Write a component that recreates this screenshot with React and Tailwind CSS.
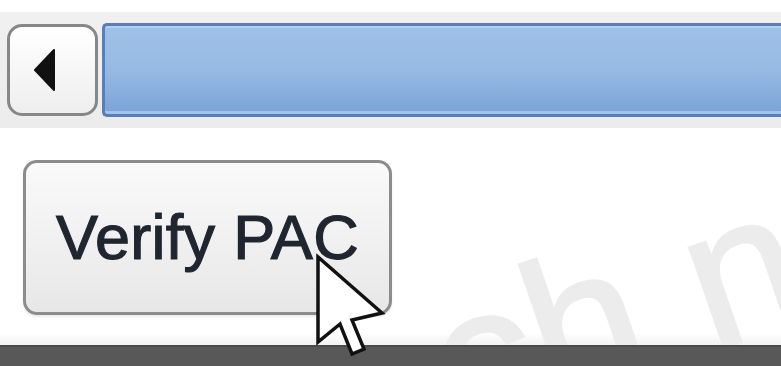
export default function App() {
  return (
    <div className="relative w-[781px] h-[366px] overflow-hidden bg-white flex flex-col" style={{ fontFamily: '"Liberation Sans", Arial, sans-serif' }}>
      {/* watermark */}
      <span
        className="absolute left-[404px] top-[279px] text-[200px] leading-none text-[#ececec] whitespace-pre origin-top-left rotate-[-19deg] select-none [-webkit-text-stroke:3px_#ececec]"
      >
        ch n
      </span>

      {/* scrollbar */}
      <div className="relative pt-[12px] bg-gradient-to-b from-white to-[#f5f5f5]">
        <div className="h-[116px] bg-gradient-to-b from-[#f0f0f0] to-[#ececec] flex items-center pl-[7px] gap-[4px]">
          <div className="w-[91px] h-[92px] shrink-0 rounded-[15px] border-[3px] border-[#878787] bg-gradient-to-b from-white to-[#eeeeee] flex items-center justify-center">
            <svg width="24" height="44" viewBox="0 0 24 44" className="mr-[16px]">
              <path d="M2 22 L21 2 L21 42 Z" fill="#111" stroke="#111" strokeWidth="2" strokeLinejoin="round" />
            </svg>
          </div>
          <div className="flex-1 h-[94px] rounded-l-[5px] border-y-[3px] border-l-[3px] border-[#5c7fb3] bg-gradient-to-b from-[#9fc1e8] via-[#97bae4] to-[#7aa3d5] shadow-[inset_0_2px_0_#b3d0f0,inset_0_-3px_0_#a3c3ea]" />
        </div>
      </div>

      {/* button row */}
      <div className="relative pl-[23px] pt-[32px]">
        <div className="w-[369px] h-[155px] rounded-[14px] border-[3px] border-[#8c8c8c] bg-gradient-to-b from-[#fafafa] to-[#e7e7e7] flex items-center justify-center shadow-[0_2px_2px_rgba(0,0,0,0.08)]">
          <span className="text-[63px] leading-none text-[#1f2630] [-webkit-text-stroke:1.2px_#1f2630] tracking-[0.3px]">Verify PAC</span>
        </div>
      </div>

      <div className="flex-1 bg-gradient-to-b from-transparent from-60% to-[#f2f2f2]" />
      <div className="relative h-[21px] bg-[#585858] border-t-[2px] border-[#4a4a4a]" />

      {/* cursor */}
      <svg className="absolute left-[314px] top-[253px]" width="74" height="108" viewBox="0 0 74 108">
        <path
          d="M4 4 L4 89 L26 71 L38 101 L50 96 L38 67 L68 60 Z"
          fill="white"
          stroke="#111"
          strokeWidth="3.5"
          strokeLinejoin="miter"
        />
      </svg>
    </div>
  );
}
